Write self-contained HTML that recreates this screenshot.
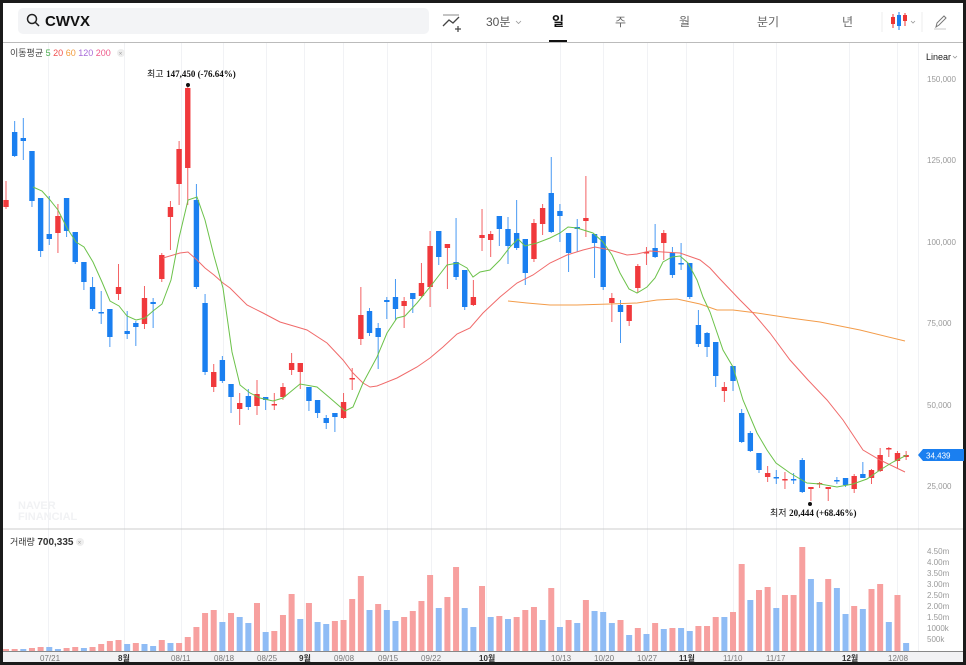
<!DOCTYPE html>
<html><head><meta charset="utf-8"><style>
html,body{margin:0;padding:0;background:#1b1b1b;}
#w{position:absolute;left:3px;top:3px;width:960px;height:659px;background:#fff;overflow:hidden;}
svg{position:absolute;left:0;top:0;}
text{font-family:"Liberation Sans","Noto Sans CJK KR",sans-serif;}
</style></head><body>
<div id="w"></div>
<svg id="s" width="966" height="665" viewBox="0 0 966 665" xmlns="http://www.w3.org/2000/svg">
<rect x="18" y="8" width="411" height="26" rx="5" fill="#f3f4f6"/>
<circle cx="32" cy="19" r="4.5" fill="none" stroke="#222" stroke-width="1.5"/>
<line x1="35.5" y1="22.5" x2="39" y2="26" stroke="#222" stroke-width="1.5"/>
<text x="45" y="26" font-size="15" font-weight="bold" fill="#111">CWVX</text>
<line x1="443" y1="15" x2="459" y2="15" stroke="#888" stroke-width="1"/>
<polyline points="443,26 449,20 453,23 459,17" fill="none" stroke="#444" stroke-width="1.3"/>
<line x1="455" y1="29" x2="461" y2="29" stroke="#444" stroke-width="1.2"/><line x1="458" y1="26" x2="458" y2="32" stroke="#444" stroke-width="1.2"/>
<text x="486" y="26" font-size="12" fill="#555">30분</text>
<polyline points="516,21 518.5,23.5 521,21" fill="none" stroke="#999" stroke-width="0.8"/>
<text x="552" y="26" font-size="13" font-weight="bold" fill="#111">일</text>
<rect x="549" y="40" width="18" height="3" fill="#111"/>
<text x="615" y="26" font-size="12" fill="#666">주</text>
<text x="679" y="26" font-size="12" fill="#666">월</text>
<text x="757" y="26" font-size="12" fill="#666">분기</text>
<text x="842" y="26" font-size="12" fill="#666">년</text>
<line x1="882" y1="12" x2="882" y2="32" stroke="#eee"/>
<line x1="893" y1="14" x2="893" y2="28" stroke="#e33" /><rect x="891" y="17" width="4" height="7" fill="#e33"/>
<line x1="899" y1="12" x2="899" y2="30" stroke="#1a7ff0"/><rect x="897" y="15" width="4" height="11" fill="#1a7ff0"/>
<line x1="905" y1="13" x2="905" y2="26" stroke="#e33"/><rect x="903" y="15" width="4" height="6" fill="#e33"/>
<polyline points="911,21 913,23 915,21" fill="none" stroke="#999" stroke-width="0.8"/>
<line x1="922" y1="12" x2="922" y2="32" stroke="#eee"/>
<path d="M936 27 L937 23 L944 16 L946 18 L939 25 Z" fill="none" stroke="#777" stroke-width="1"/>
<line x1="934" y1="29" x2="946" y2="29" stroke="#bbb" stroke-width="0.8"/>
<line x1="3" y1="42.5" x2="963" y2="42.5" stroke="#bbb" stroke-width="1"/>
<g id="grid"></g>
<line x1="3" y1="529" x2="963" y2="529" stroke="#ccc" stroke-width="1"/>
<line x1="3" y1="651.5" x2="963" y2="651.5" stroke="#888" stroke-width="1"/>
<rect x="3" y="652" width="960" height="10" fill="#f2f2f4"/>
<text x="10" y="56" font-size="9" fill="#444">이동평균 <tspan fill="#4caf50">5</tspan> <tspan fill="#f0504f">20</tspan> <tspan fill="#f39c3c">60</tspan> <tspan fill="#a86bd9">120</tspan> <tspan fill="#ee5a8a">200</tspan></text>
<circle cx="121" cy="53" r="4" fill="#eee"/><text x="118.8" y="55.5" font-size="6" fill="#999">×</text>
<text x="926" y="60" font-size="9" fill="#222">Linear</text>
<polyline points="953,56 955,58 957,56" fill="none" stroke="#999" stroke-width="0.8"/>
<g font-size="8" fill="#999">
<text x="927" y="82">150,000</text><text x="927" y="163">125,000</text><text x="927" y="245">100,000</text><text x="927" y="326">75,000</text><text x="927" y="408">50,000</text><text x="927" y="489">25,000</text>
<text x="927" y="554">4.50m</text><text x="927" y="565">4.00m</text><text x="927" y="576">3.50m</text><text x="927" y="587">3.00m</text><text x="927" y="598">2.50m</text><text x="927" y="609">2.00m</text><text x="927" y="620">1.50m</text><text x="927" y="631">1000k</text><text x="927" y="642">500k</text>
</g>
<text x="18" y="509" font-size="11" font-weight="bold" fill="#f1f2f4">NAVER</text>
<text x="18" y="520" font-size="11" font-weight="bold" fill="#f1f2f4">FINANCIAL</text>
<text x="10" y="545" font-size="9" fill="#333">거래량 <tspan font-weight="bold" font-size="10">700,335</tspan></text>
<circle cx="80" cy="542" r="4" fill="#eee"/><text x="77.8" y="544.5" font-size="6" fill="#999">×</text>
<g id="vol"></g>
<g id="cd"></g>
<polyline fill="none" stroke="#f39c4a" stroke-width="1" points="508,301 527,303 550,305 577,305 610,304 637,303 657,300 677,299 700,304 717,310 733,310 757,313 790,318 820,322 860,330 905,341"/>
<polyline fill="none" stroke="#f06a6a" stroke-width="1" points="163,258 180,253 188,252 197,260 205,268 214,275 223,283 230,288 247,305 263,313 280,322 297,327 307,330 327,343 343,360 353,373 363,383 370,387 377,386 397,378 417,367 430,358 443,347 457,334 470,328 483,313 500,297 517,283 533,275 550,263 567,255 583,250 595,247 610,250 627,255 637,254 650,251 663,252 680,253 700,260 710,268 720,279 740,300 753,313 770,333 790,360 808,380 827,400 843,420 863,450 880,460 905,472"/>
<polyline fill="none" stroke="#6cc24a" stroke-width="1" points="33,187 42,191 50,200 58,210 67,228 76,242 84,247 93,262 102,282 110,301 119,306 127,316 136,320 145,318 153,311 162,304 171,280 179,238 188,200 197,197 205,220 214,256 223,288 232,352 240,385 250,393 260,398 273,401 283,398 300,384 317,387 330,398 345,411 353,407 363,383 377,357 387,333 397,318 405,316 417,303 430,287 447,265 458,263 467,268 473,277 480,272 490,270 500,260 510,247 518,239 525,246 537,243 550,238 560,233 568,227 577,228 593,233 603,242 612,255 620,273 629,289 637,293 647,287 655,278 663,262 672,257 680,256 688,263 697,280 703,297 710,312 723,350 733,367 743,400 757,433 767,450 776,463 790,473 807,483 820,484 837,487 853,484 867,479 880,470 893,462 907,455"/>
<circle cx="188" cy="85" r="2" fill="#111"/>
<text x="147" y="77" font-size="9" fill="#111">최고 <tspan font-family="Liberation Serif" font-weight="bold">147,450 (-76.64%)</tspan></text>
<circle cx="810" cy="504" r="2" fill="#111"/>
<text x="770" y="516" font-size="9" fill="#111">최저 <tspan font-family="Liberation Serif" font-weight="bold">20,444 (+68.46%)</tspan></text>
<path d="M918 455 L923 449 L964 449 L964 461 L923 461 Z" fill="#1a7ff0"/>
<text x="926" y="458.5" font-size="8" fill="#fff">34,439</text>
<g font-size="8" fill="#777" id="dl">
<text x="40" y="661">07/21</text><text x="118" y="661" font-weight="bold" fill="#333">8월</text><text x="171" y="661">08/11</text><text x="214" y="661">08/18</text><text x="257" y="661">08/25</text><text x="299" y="661" font-weight="bold" fill="#333">9월</text><text x="334" y="661">09/08</text><text x="378" y="661">09/15</text><text x="421" y="661">09/22</text><text x="479" y="661" font-weight="bold" fill="#333">10월</text><text x="551" y="661">10/13</text><text x="594" y="661">10/20</text><text x="637" y="661">10/27</text><text x="679" y="661" font-weight="bold" fill="#333">11월</text><text x="723" y="661">11/10</text><text x="766" y="661">11/17</text><text x="842" y="661" font-weight="bold" fill="#333">12월</text><text x="888" y="661">12/08</text>
</g>
</svg>
<script>
var NS="http://www.w3.org/2000/svg";
function el(p,t,a){var e=document.createElementNS(NS,t);for(var k in a)e.setAttribute(k,a[k]);p.appendChild(e);return e;}
var g=document.getElementById('grid');
[48,124,181,223,266,304,343,387,431,486,560,603,647,686,733,776,849,897].forEach(function(x){el(g,'line',{x1:x+.5,y1:43,x2:x+.5,y2:651,stroke:'#f1f2f5','stroke-width':1});});
el(g,'line',{x1:918.5,y1:43,x2:918.5,y2:651,stroke:'#f1f2f5'});
var R='#f0393c',B='#1a7ff0';
var c=[[200,207,181,209,R],[132,156,121,157,B],[138,141,118,160,B],[151,201,151,207,B],[198,251,198,257,B],[234,239,196,245,B],[216,233,204,253,R],[198,231,198,237,B],[232,262,232,264,B],[262,282,262,290,B],[287,309,277,311,B],[312,313,291,324,B],[309,337,309,347,B],[287,294,264,300,R],[331,334,311,339,B],[323,327,321,346,B],[298,324,286,329,R],[302,304,298,328,B],[255,279,253,282,R],[207,217,201,250,R],[149,184,141,205,R],[88,168,85,205,R],[200,287,184,289,B],[303,372,294,375,B],[372,387,364,392,R],[360,381,356,383,B],[384,397,384,413,B],[403,409,393,425,R],[396,407,389,410,B],[394,406,380,415,R],[397,400,397,410,B],[404,405,393,410,R],[387,397,383,400,R],[363,370,353,375,R],[363,372,363,389,R],[387,401,387,411,B],[400,413,400,418,B],[418,423,415,429,B],[413,417,413,432,B],[402,418,393,419,R],[378,379,368,390,R],[315,339,287,345,R],[311,333,308,336,B],[328,337,323,369,B],[300,302,297,319,B],[297,309,279,320,B],[301,306,297,328,R],[293,299,293,313,B],[283,296,263,297,R],[246,287,231,307,R],[231,257,231,265,B],[244,248,244,289,R],[262,277,218,280,B],[270,307,270,310,B],[297,305,280,306,R],[235,238,209,251,R],[234,240,231,257,R],[216,229,216,246,B],[229,246,217,264,B],[233,248,200,250,B],[239,273,239,285,B],[223,259,219,262,R],[208,224,204,235,R],[193,232,157,233,B],[211,216,204,242,B],[233,253,233,272,B],[227,229,219,252,B],[218,221,176,237,R],[234,243,234,278,B],[236,287,236,290,B],[298,303,293,322,R],[305,312,300,343,B],[305,321,305,326,R],[266,288,264,293,R],[252,253,247,265,R],[248,257,224,258,B],[233,243,230,260,R],[253,275,247,278,B],[263,264,243,270,B],[263,297,263,299,B],[325,344,310,347,B],[333,347,332,357,B],[342,376,342,387,B],[387,391,382,402,R],[366,381,366,391,B],[413,442,409,443,B],[433,451,431,452,B],[453,470,453,473,B],[473,477,466,482,R],[477,478,470,484,B],[479,480,472,489,R],[479,480,473,484,B],[460,492,458,493,B],[487,489,487,501,R],[483,484,482,488,R],[487,489,487,501,R],[480,481,477,484,B],[478,485,478,487,B],[476,489,474,493,R],[474,478,462,478,B],[470,478,469,484,R],[455,471,448,472,R],[448,449,447,457,R],[453,461,451,469,R],[455,457,451,460,R]];
var cd=document.getElementById('cd');
c.forEach(function(d,i){var x=6+i*8.655;
el(cd,'line',{x1:x,y1:d[2],x2:x,y2:d[3],stroke:d[4],'stroke-width':1,'stroke-opacity':.8});
var h=Math.max(1.5,d[1]-d[0]);el(cd,'rect',{x:x-2.7,y:d[0],width:5.4,height:h,fill:d[4]});});
var vt=[649,649,649,648,647,647,649,648,647,648,647,644,641,640,644,643,644,646,640,643,643,637,627,613,610,622,613,617,623,603,632,631,615,594,619,603,622,624,621,620,599,576,610,604,610,621,617,611,601,575,608,597,567,608,627,586,617,616,619,617,610,607,620,588,627,620,623,600,611,612,623,620,635,628,634,623,629,628,628,631,626,626,617,617,612,564,600,590,587,608,595,595,547,579,602,579,588,614,606,609,589,584,622,595,643];
var vc="rrbrrbbrrbrrrrbrbbrbrrrrrbrbbrbrrrbrbbrrrrbrbbrrrrbrrbbrbrbrrrbrbrbrbbbrbrbrbrbbrrrbrrbrrbrrrbbrbbrbrrbrb";
var vg=document.getElementById('vol');
vt.forEach(function(t,i){var x=6+i*8.655;el(vg,'rect',{x:x-3,y:t,width:6,height:651-t,fill:vc[i]=='r'?'#f7a09f':'#8fbcf5'});});
</script>
</body></html>
